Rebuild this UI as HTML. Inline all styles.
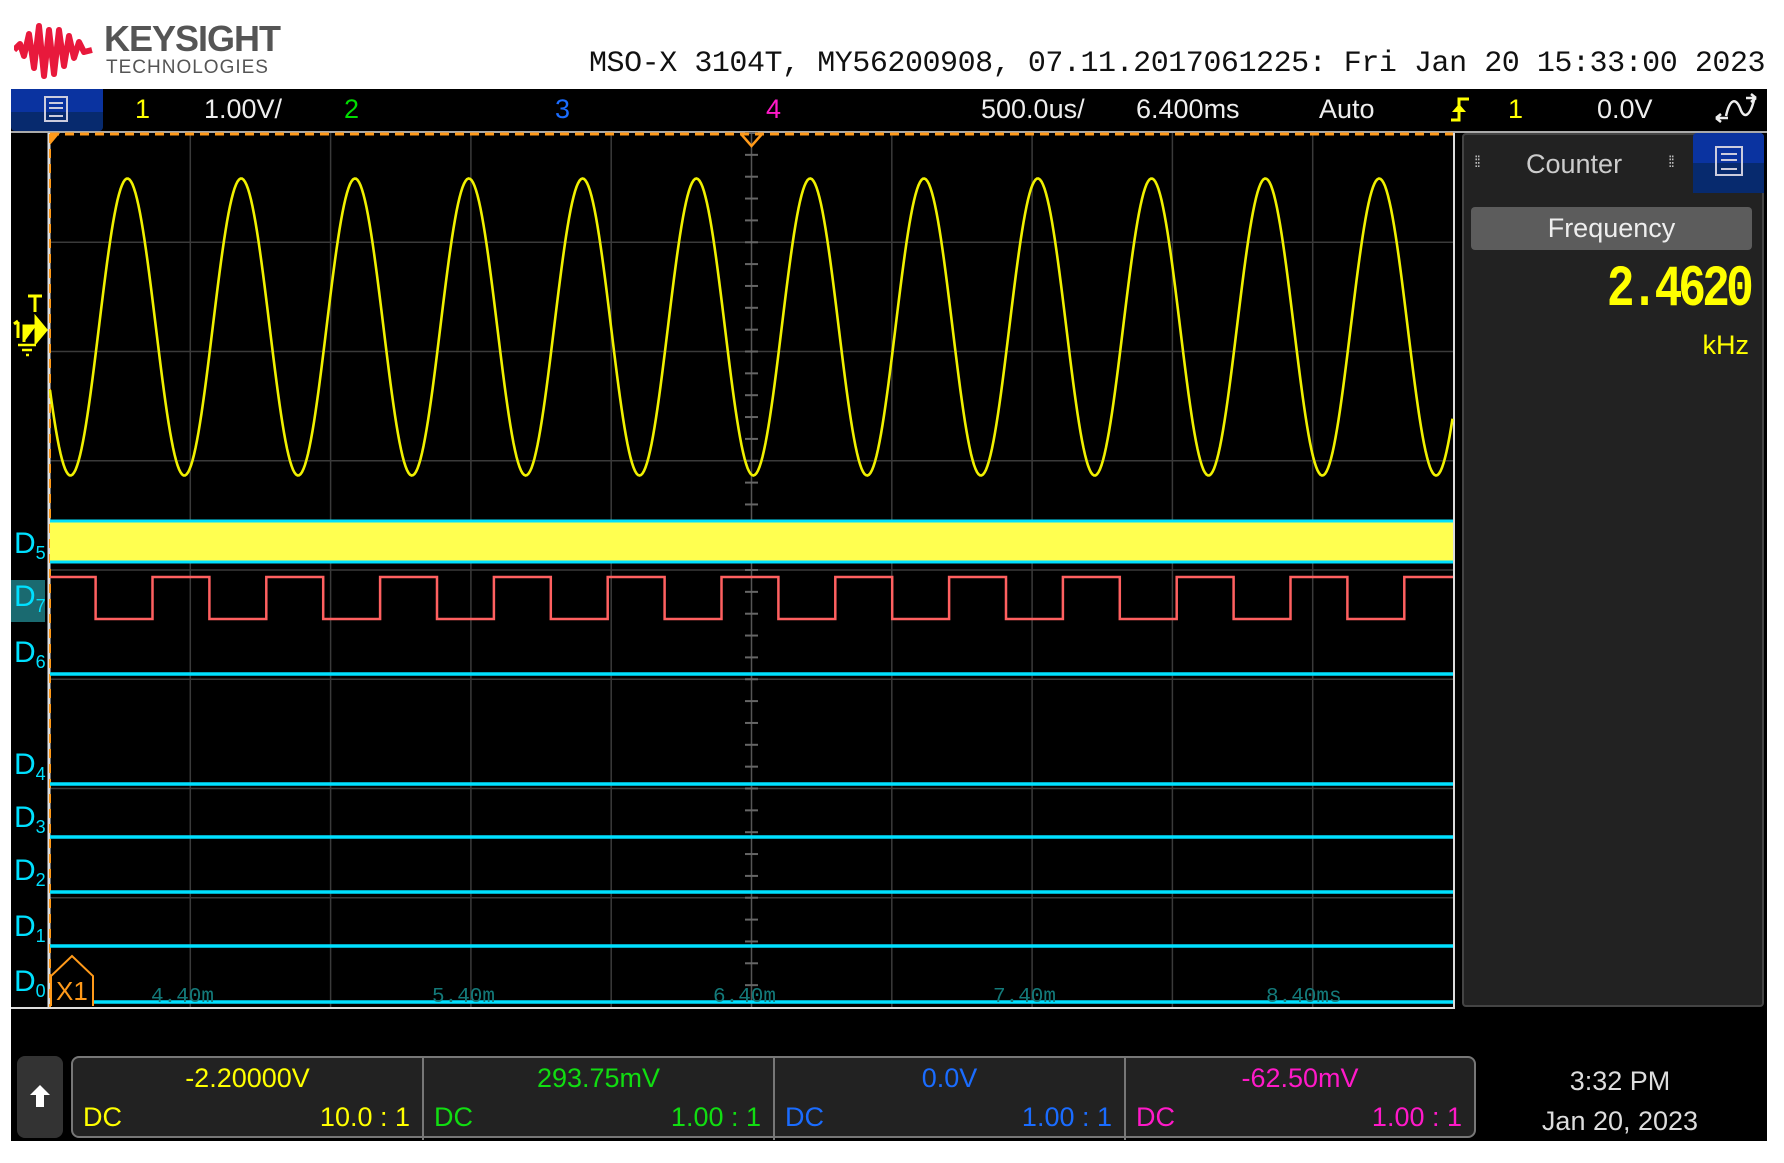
<!DOCTYPE html>
<html><head><meta charset="utf-8"><style>
body{margin:0;width:1784px;height:1163px;background:#fff;position:relative;overflow:hidden;font-family:"Liberation Sans",sans-serif}
.a{position:absolute;white-space:nowrap}
.t{font-size:27px;line-height:1}
.d{color:#00e0ff;font-size:30px;left:14px}
.d sub{font-size:18px;vertical-align:-6px}
.tl{color:#137a7a;font-size:21px;top:986px;font-family:"Liberation Mono",monospace}
.cell{position:absolute;top:0;height:82px;border-right:2px solid #777}
.cell .v{position:absolute;top:5px;width:100%;text-align:center;font-size:27px}
.cell .l{position:absolute;left:10px;top:44px;font-size:27px}
.cell .r{position:absolute;right:12px;top:44px;font-size:27px}
</style></head><body>
<svg class="a" style="left:14px;top:20px" width="80" height="62" viewBox="0 0 80 62">
<path d="M0 30 L6 24 L10 36 L15 14 L20 48 L25 6 L30 56 L35 10 L40 54 L45 10 L50 46 L55 16 L60 38 L65 22 L70 32 L78 30" fill="none" stroke="#e8193c" stroke-width="6" stroke-linejoin="round"/></svg>
<div class="a" style="left:104px;top:18px;font-size:36px;font-weight:bold;color:#555;letter-spacing:-1px">KEYSIGHT</div>
<div class="a" style="left:106px;top:57px;font-size:19px;color:#555;letter-spacing:1px">TECHNOLOGIES</div>
<div class="a" style="left:589px;top:47px;font-size:30px;font-family:'Liberation Mono',monospace;color:#111;letter-spacing:-0.45px">MSO-X 3104T, MY56200908, 07.11.2017061225: Fri Jan 20 15:33:00 2023</div>

<div class="a" style="left:11px;top:89px;width:1756px;height:1052px;background:#000"></div>
<div class="a" style="left:11px;top:89px;width:92px;height:42px;background:linear-gradient(#0a33a0 55%,#072a6e 55%);border-radius:0 0 4px 4px"></div>
<div class="a" style="left:44px;top:96px;width:24px;height:26px;border:2px solid #ccd;box-sizing:border-box"></div>
<div class="a" style="left:49px;top:102px;width:14px;height:11px;border-top:2px solid #ccd;border-bottom:2px solid #ccd"></div>
<div class="a" style="left:49px;top:107px;width:14px;height:2px;background:#ccd"></div>
<div class="a" style="left:11px;top:131px;width:1756px;height:2px;background:#aaa"></div>

<div class="a t" style="left:135px;top:96px;color:#ff0">1</div>
<div class="a t" style="left:204px;top:96px;color:#eee">1.00V/</div>
<div class="a t" style="left:344px;top:96px;color:#0d0">2</div>
<div class="a t" style="left:555px;top:96px;color:#1a6cff">3</div>
<div class="a t" style="left:766px;top:96px;color:#ff19c8">4</div>
<div class="a t" style="left:981px;top:96px;color:#eee">500.0us/</div>
<div class="a t" style="left:1136px;top:96px;color:#eee">6.400ms</div>
<div class="a t" style="left:1319px;top:96px;color:#eee">Auto</div>
<svg class="a" style="left:1448px;top:96px" width="24" height="26"><path d="M3 24 H11 V3 H21" fill="none" stroke="#ff0" stroke-width="3"/><path d="M4 16 L11 8 L18 16Z" fill="#ff0"/></svg>
<div class="a t" style="left:1508px;top:96px;color:#ff0">1</div>
<div class="a t" style="left:1597px;top:96px;color:#eee">0.0V</div>
<svg class="a" style="left:1712px;top:92px" width="48" height="34"><path d="M4 26 H16 M4 26 l5 -4 M4 26 l5 4 M14 24 C18 6,24 6,28 16 C32 28,38 24,42 8 M34 6 H44 M44 6 l-5 -4 M44 6 l-5 4" fill="none" stroke="#eee" stroke-width="2.5"/></svg>

<svg class="a" style="left:0;top:0" width="1784" height="1163">
<g stroke="#3a3a3a" stroke-width="1.5" id="grid"></g>
<line x1="751.5" y1="133" x2="751.5" y2="1007" stroke="#555" stroke-width="1.5"/>
<g id="ticks" stroke="#666" stroke-width="2"></g>
<line x1="49" y1="133" x2="49" y2="1007" stroke="#ddd" stroke-width="3"/>
<line x1="1454" y1="133" x2="1454" y2="1007" stroke="#ddd" stroke-width="2"/>
<line x1="11" y1="1008" x2="1455" y2="1008" stroke="#ddd" stroke-width="2"/>
<line x1="50" y1="134" x2="1453" y2="134" stroke="#ff9a1a" stroke-width="3" stroke-dasharray="9 6"/>
<line x1="50" y1="134" x2="50" y2="1007" stroke="#ff9a1a" stroke-width="2" stroke-dasharray="9 6"/>
<path d="M50 133 L60 133 L50 145Z" fill="#ff9a1a"/>
<path d="M741 134 L751.5 146 L762 134" fill="none" stroke="#ff9a1a" stroke-width="2.5"/>
<path id="sine" fill="none" stroke="#f0f000" stroke-width="2.6"/>
<rect x="50" y="521" width="1403" height="41" fill="#ffff50"/>
<line x1="50" y1="521" x2="1453" y2="521" stroke="#00e0ff" stroke-width="3"/>
<line x1="50" y1="562" x2="1453" y2="562" stroke="#00e0ff" stroke-width="3"/>
<path id="sq" fill="none" stroke="#ff6060" stroke-width="2.5"/>
<g stroke="#00e0ff" stroke-width="3.5">
<line x1="50" y1="674" x2="1453" y2="674"/><line x1="50" y1="784" x2="1453" y2="784"/><line x1="50" y1="837" x2="1453" y2="837"/>
<line x1="50" y1="892" x2="1453" y2="892"/><line x1="50" y1="946" x2="1453" y2="946"/><line x1="94" y1="1002" x2="1453" y2="1002"/></g>
<path d="M51 1006 V976 L72 956 L93 976 V1006" fill="none" stroke="#ff9a1a" stroke-width="2"/>
<g fill="#ff0" stroke="#ff0">
<path d="M28 296 H42 M35 296 V312" stroke-width="3" fill="none"/>
<path d="M18 322 V338 M14 324 l4 -3" stroke-width="3" fill="none"/>
<path d="M24 342 V326 H36 M36 318 L46 330 L36 342Z" stroke-width="3"/>
<path d="M18 345 H36 M22 350 H32 M26 355 H29" stroke-width="2.5" fill="none"/>
</g>
</svg>

<div class="a d" style="top:527px">D<sub>5</sub></div>
<div class="a" style="left:11px;top:580px;width:34px;height:42px;background:#1a6a70"></div>
<div class="a d" style="top:580px">D<sub>7</sub></div>
<div class="a d" style="top:636px">D<sub>6</sub></div>
<div class="a d" style="top:748px">D<sub>4</sub></div>
<div class="a d" style="top:801px">D<sub>3</sub></div>
<div class="a d" style="top:854px">D<sub>2</sub></div>
<div class="a d" style="top:910px">D<sub>1</sub></div>
<div class="a d" style="top:965px">D<sub>0</sub></div>
<div class="a" style="left:56px;top:976px;color:#ff9a1a;font-size:26px">X1</div>
<div class="a tl" style="left:151px">4.40m</div>
<div class="a tl" style="left:432px">5.40m</div>
<div class="a tl" style="left:713px">6.40m</div>
<div class="a tl" style="left:993px">7.40m</div>
<div class="a tl" style="left:1266px">8.40ms</div>

<div class="a" style="left:1462px;top:133px;width:302px;height:874px;background:#222;border:2px solid #444;box-sizing:border-box;border-radius:4px"></div>
<div class="a" style="left:1693px;top:133px;width:71px;height:60px;background:linear-gradient(#0a33a0 50%,#072a6e 50%);border-radius:4px 4px 0 0"></div>
<div class="a" style="left:1715px;top:146px;width:28px;height:30px;border:2px solid #ccd;box-sizing:border-box"></div>
<div class="a" style="left:1721px;top:153px;width:16px;height:13px;border-top:2px solid #ccd;border-bottom:2px solid #ccd"></div>
<div class="a" style="left:1721px;top:159px;width:16px;height:2px;background:#ccd"></div>
<div class="a" style="left:1474px;top:154px;color:#bbb;font-size:16px;letter-spacing:-2px">⁞⁞</div>
<div class="a" style="left:1668px;top:154px;color:#bbb;font-size:16px;letter-spacing:-2px">⁞⁞</div>
<div class="a" style="left:1526px;top:149px;color:#ccc;font-size:27px">Counter</div>
<div class="a" style="left:1471px;top:207px;width:281px;height:43px;background:#5c5c5c;border-radius:4px;color:#eee;font-size:27px;text-align:center;line-height:43px">Frequency</div>
<div class="a" style="right:34px;top:262px;color:#ff0;font-size:58px;font-family:'Liberation Mono',monospace;font-weight:bold;letter-spacing:-5px;transform:scaleX(0.8);transform-origin:right;line-height:1">2.4620</div>
<div class="a" style="right:35px;top:330px;color:#ff0;font-size:27px">kHz</div>

<div class="a" style="left:17px;top:1056px;width:46px;height:82px;background:#333;border-radius:8px"></div>
<svg class="a" style="left:28px;top:1083px" width="24" height="26"><path d="M12 2 L22 12 H16 V24 H8 V12 H2Z" fill="#fff"/></svg>
<div class="a" style="left:71px;top:1056px;width:1405px;height:82px;background:#222;border:2px solid #777;box-sizing:border-box;border-radius:8px">
<div class="cell" style="left:0;width:349px"><div class="v" style="color:#ff0">-2.20000V</div><div class="l" style="color:#ff0">DC</div><div class="r" style="color:#ff0">10.0 : 1</div></div>
<div class="cell" style="left:351px;width:349px"><div class="v" style="color:#1d1">293.75mV</div><div class="l" style="color:#1d1">DC</div><div class="r" style="color:#1d1">1.00 : 1</div></div>
<div class="cell" style="left:702px;width:349px"><div class="v" style="color:#1a6cff">0.0V</div><div class="l" style="color:#1a6cff">DC</div><div class="r" style="color:#1a6cff">1.00 : 1</div></div>
<div class="cell" style="left:1053px;width:348px;border:none"><div class="v" style="color:#ff19c8">-62.50mV</div><div class="l" style="color:#ff19c8">DC</div><div class="r" style="color:#ff19c8">1.00 : 1</div></div>
</div>
<div class="a" style="left:1520px;top:1066px;width:200px;text-align:center;color:#ddd;font-size:27px">3:32 PM</div>
<div class="a" style="left:1520px;top:1106px;width:200px;text-align:center;color:#ddd;font-size:27px">Jan 20, 2023</div>

<script>
var d="";for(var x=50;x<=1453;x+=1.5){var y=327-148.5*Math.cos(2*Math.PI*(x-127.4)/113.8);d+=(x==50?"M":"L")+x.toFixed(1)+" "+y.toFixed(1);}
document.getElementById("sine").setAttribute("d",d);
var s="M50 577",hi=577,lo=619,x=95.6,h=true;while(x<1453){s+=" H"+x.toFixed(1)+" V"+(h?lo:hi);h=!h;x+=56.9;}s+=" H1453";
document.getElementById("sq").setAttribute("d",s);
var gr="";for(var i=1;i<10;i++){if(i==5)continue;var gx=50+140.3*i;gr+='<line x1="'+gx+'" y1="133" x2="'+gx+'" y2="1007"/>';}
for(var j=1;j<8;j++){var gy=133+109.25*j;gr+='<line x1="50" y1="'+gy+'" x2="1453" y2="'+gy+'"/>';}
document.getElementById("grid").innerHTML=gr;
var t="";for(var y=133;y<=1007;y+=21.85)t+='<line x1="745" y1="'+y+'" x2="758" y2="'+y+'"/>';
document.getElementById("ticks").innerHTML=t;
</script>
</body></html>
